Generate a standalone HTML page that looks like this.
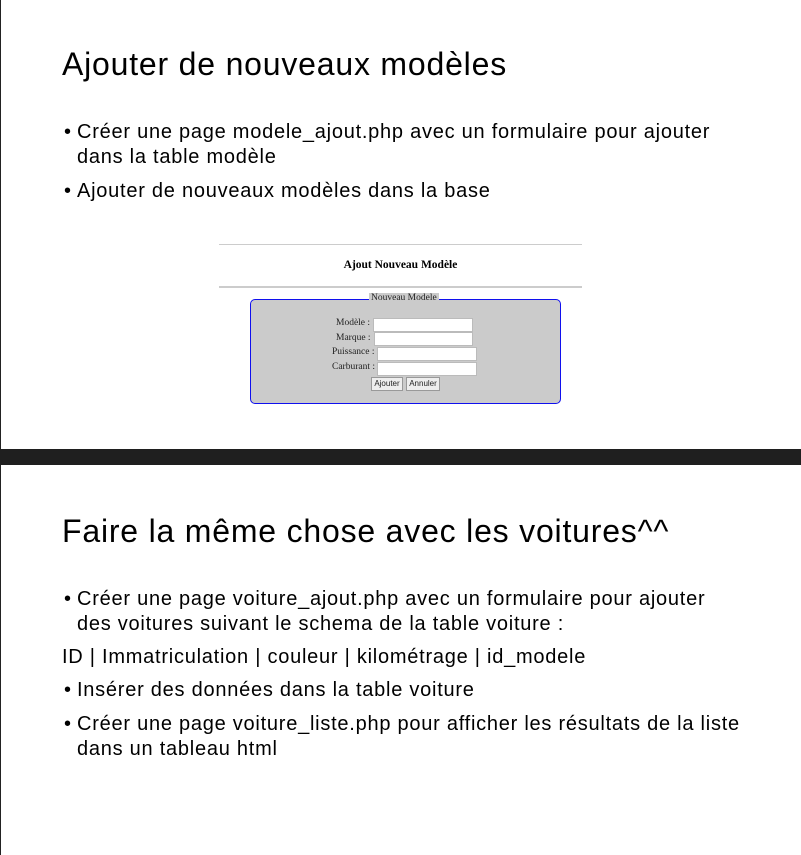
<!DOCTYPE html>
<html><head><meta charset="utf-8"><style>
*{margin:0;padding:0;box-sizing:border-box}
body{width:801px;height:855px;background:#fff;position:relative;overflow:hidden;font-family:"Liberation Sans",sans-serif;color:#000}
.a{position:absolute;white-space:nowrap}
.t{font-size:32px;letter-spacing:0.8px}
.b{font-size:20px;letter-spacing:0.75px}
.s{font-family:"Liberation Serif",serif;font-size:9.5px;color:#222}
.in{position:absolute;background:#fff;border:1px solid #bbb;height:14px}
.btn{position:absolute;background:#eee;border:1px solid #999;height:14px;font-size:8px;line-height:12px;text-align:center;color:#222}
</style></head><body>
<div class="a" style="left:0;top:0;width:1px;height:449px;background:#222"></div>
<div class="a" style="left:0;top:465px;width:1px;height:390px;background:#222"></div>
<div class="a" style="left:0;top:449px;width:801px;height:16px;background:#1f1f1f"></div>

<div class="a t" style="left:62px;top:46px">Ajouter de nouveaux modèles</div>
<div class="a b" style="left:64px;top:121px">•</div>
<div class="a b" style="left:77px;top:121px">Créer une page modele_ajout.php avec un formulaire pour ajouter</div>
<div class="a b" style="left:77px;top:146px">dans la table modèle</div>
<div class="a b" style="left:64px;top:180px">•</div>
<div class="a b" style="left:77px;top:180px">Ajouter de nouveaux modèles dans la base</div>

<div class="a" style="left:219px;top:244px;width:363px;height:1px;background:#ccc"></div>
<div class="a" style="left:219px;top:286px;width:363px;height:2px;background:#ccc"></div>
<div class="a" style="left:219px;top:259px;width:363px;text-align:center;font-family:'Liberation Serif',serif;font-weight:bold;font-size:11.5px">Ajout Nouveau Modèle</div>
<div class="a" style="left:250px;top:299px;width:311px;height:105px;border:1.5px solid #1010ee;border-radius:5px;background:#cbcbcb"></div>
<div class="a s" style="left:369px;top:293px;background:#cbcbcb;padding:0 2px">Nouveau Modele</div>
<div class="a s" style="left:336px;top:318px">Modèle :</div>
<div class="in" style="left:373px;top:318px;width:100px"></div>
<div class="a s" style="left:336px;top:333px">Marque :</div>
<div class="in" style="left:374px;top:332px;width:99px"></div>
<div class="a s" style="left:332px;top:347px">Puissance :</div>
<div class="in" style="left:377px;top:347px;width:100px"></div>
<div class="a s" style="left:332px;top:362px">Carburant :</div>
<div class="in" style="left:377px;top:362px;width:100px"></div>
<div class="btn" style="left:371px;top:377px;width:32px">Ajouter</div>
<div class="btn" style="left:406px;top:377px;width:34px">Annuler</div>

<div class="a t" style="left:62px;top:513px">Faire la même chose avec les voitures^^</div>
<div class="a b" style="left:64px;top:588px">•</div>
<div class="a b" style="left:77px;top:588px">Créer une page voiture_ajout.php avec un formulaire pour ajouter</div>
<div class="a b" style="left:77px;top:613px">des voitures suivant le schema de la table voiture :</div>
<div class="a b" style="left:62px;top:646px">ID | Immatriculation | couleur | kilométrage | id_modele</div>
<div class="a b" style="left:64px;top:679px">•</div>
<div class="a b" style="left:77px;top:679px">Insérer des données dans la table voiture</div>
<div class="a b" style="left:64px;top:713px">•</div>
<div class="a b" style="left:77px;top:713px">Créer une page voiture_liste.php pour afficher les résultats de la liste</div>
<div class="a b" style="left:77px;top:738px">dans un tableau html</div>
</body></html>
